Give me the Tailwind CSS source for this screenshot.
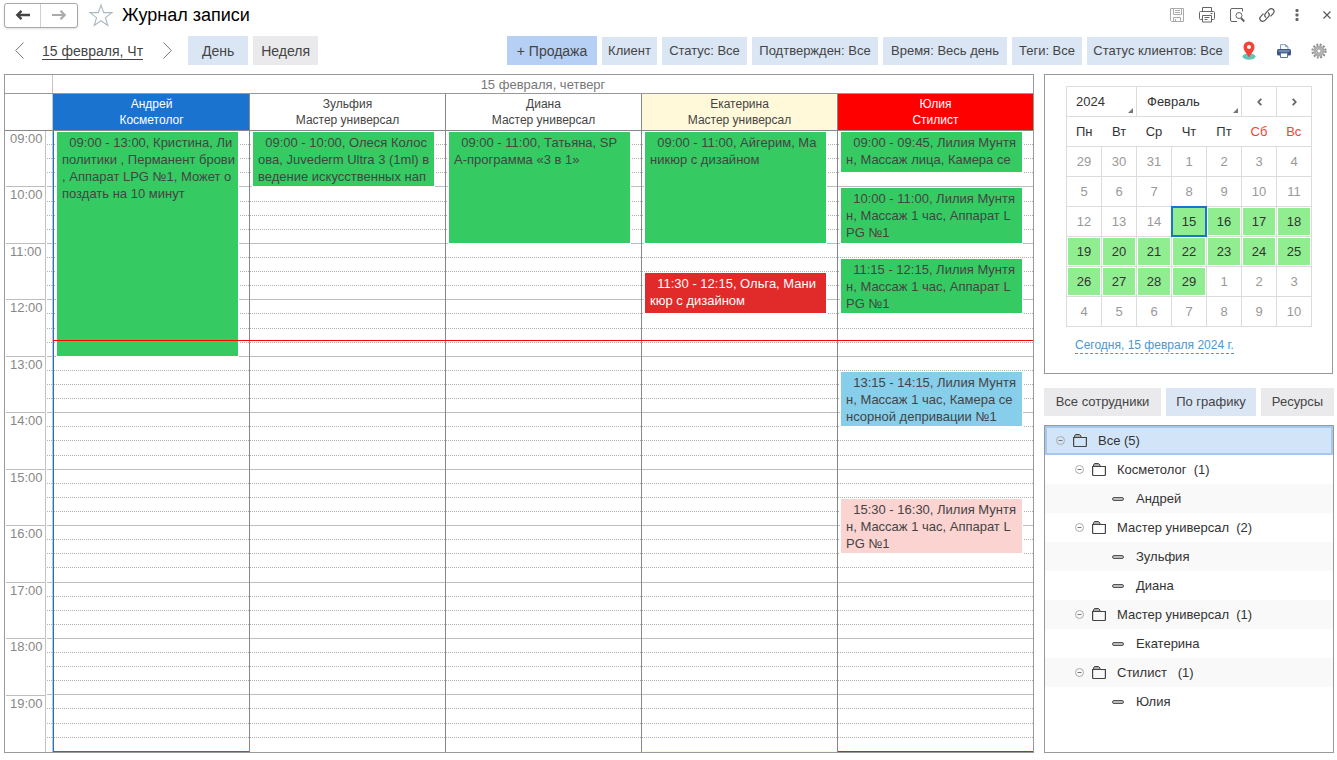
<!DOCTYPE html>
<html lang="ru">
<head>
<meta charset="utf-8">
<title>Журнал записи</title>
<script src="https://cdn.jsdelivr.net/npm/@tailwindcss/browser@4"></script>
</head>
<body class="flex min-h-screen flex-col bg-white pr-[3px] pb-[7px] pl-1 font-['Liberation_Sans',Arial,sans-serif] text-[13px] leading-4 text-[#444]">

<header class="flex h-[30px] items-center">
  <div class="flex h-[25px] overflow-hidden rounded-[3px] border border-[#a8a8a8] bg-white shadow-sm">
    <button type="button" aria-label="Назад" class="flex w-9 items-center justify-center border-r border-[#d0d0d0]">
      <svg width="16" height="12" viewBox="0 0 16 12" fill="none" stroke="#444" stroke-width="2.4"><path d="M15 6H3M6.500 1.800L2.300 6l4.200 4.200"/></svg>
    </button>
    <button type="button" aria-label="Вперед" class="flex w-9 items-center justify-center">
      <svg width="16" height="12" viewBox="0 0 16 12" fill="none" stroke="#aaa" stroke-width="2.200"><path d="M1 6H13M9.500 1.800L13.700 6l-4.200 4.200"/></svg>
    </button>
  </div>
  <button type="button" aria-label="В избранное" class="ml-2.5">
    <svg width="26" height="24" viewBox="0 0 26 24" fill="none" stroke="#a9b8c0" stroke-width="1.100"><path d="M13 2l2.700 7.600h8.300l-6.600 5 2.400 7.900-6.800-4.800-6.800 4.800 2.400-7.900-6.600-5h8.300z"/></svg>
  </button>
  <h1 class="ml-2 text-lg leading-6 text-black">Журнал записи</h1>
  <div class="ml-auto flex items-center">
    <button type="button" aria-label="Сохранить" class="flex w-[30px] justify-center">
      <svg width="16" height="16" viewBox="0 0 16 16" fill="none" stroke="#aaa"><path d="M1.500 1.500h13v13h-12l-1-1zM4.500 1.500v6h8v-6M6 3.500h5M6 5.500h5M4.500 14.500v-4h7v4M6.500 12v2"/></svg>
    </button>
    <button type="button" aria-label="Печать" class="flex w-[30px] justify-center">
      <svg width="18" height="16" viewBox="0 0 18 16" fill="none" stroke="#666"><path d="M4.500 4.500v-4h9v4M4.500 12.500H2.500a1 1 0 0 1-1-1v-6a1 1 0 0 1 1-1h13a1 1 0 0 1 1 1v6a1 1 0 0 1-1 1H13.500M4.500 8.500h9v6.500h-9zM6.500 10.500h5M6.500 12.500h3M12.500 6.500h2"/></svg>
    </button>
    <button type="button" aria-label="Просмотр" class="flex w-[30px] justify-center">
      <svg width="16" height="16" viewBox="0 0 16 16" fill="none" stroke="#666"><path d="M8 14.500H3a1.500 1.500 0 0 1-1.500-1.500V3A1.500 1.500 0 0 1 3 1.500h10.500v3"/><circle cx="10" cy="8.500" r="3"/><path stroke-width="2" d="M12 11l3.300 3.500"/></svg>
    </button>
    <button type="button" aria-label="Ссылка" class="flex w-[30px] justify-center">
      <svg width="18" height="16" viewBox="0 0 18 16" fill="none" stroke="#555" stroke-width="1.200"><path d="M8 10.500C6.300 9 6.500 7.500 7.500 6.300L11 2.700c1.300-1.300 3.200-1.300 4.300-.2s1.100 2.900-.2 4.200L12.500 9.300"/><path d="M10 5.500c1.700 1.500 1.500 3 .5 4.200L7 13.300c-1.300 1.300-3.200 1.300-4.300.2s-1.100-2.900.2-4.200L5.500 6.700"/></svg>
    </button>
    <button type="button" aria-label="Ещё" class="mr-2 flex w-[30px] justify-center">
      <svg width="4" height="12" viewBox="0 0 4 12" fill="#666"><rect x=".5" width="3" height="3" rx=".8"/><rect x=".5" y="4.500" width="3" height="3" rx=".8"/><rect x=".5" y="9" width="3" height="3" rx=".8"/></svg>
    </button>
    <button type="button" aria-label="Закрыть" class="flex w-3.5 justify-center">
      <svg width="8" height="8" viewBox="0 0 8 8" stroke="#555" stroke-width="1.100"><path d="M.5.500l7 7M7.500.500l-7 7"/></svg>
    </button>
  </div>
</header>

<nav class="mt-[6px] flex h-[29px] items-center">
  <button type="button" aria-label="Предыдущий день" class="ml-[11px]">
    <svg width="9" height="17" viewBox="0 0 9 17" fill="none" stroke="#777"><path d="M8.500.500L.700 8.500l7.800 8"/></svg>
  </button>
  <a href="#" class="ml-[18px] border-b border-[#444] pt-px text-sm leading-4">15 февраля, Чт</a>
  <button type="button" aria-label="Следующий день" class="ml-5">
    <svg width="9" height="17" viewBox="0 0 9 17" fill="none" stroke="#777"><path d="M.500.500l7.800 8-7.800 8"/></svg>
  </button>
  <button type="button" class="ml-4 h-[29px] w-[60px] bg-[#dae6f4] text-sm">День</button>
  <button type="button" class="ml-[5px] h-[29px] w-[65px] bg-[#eaeaec] text-sm">Неделя</button>
  <div class="ml-auto flex items-end gap-[5px]">
    <button type="button" class="h-[29px] w-[90px] bg-[#b5cff5] text-sm">+ Продажа</button>
    <button type="button" class="h-7 w-[55px] bg-[#dae6f4]">Клиент</button>
    <button type="button" class="h-7 w-[85px] bg-[#dae6f4]">Статус: Все</button>
    <button type="button" class="h-7 w-[126px] bg-[#dae6f4]">Подтвержден: Все</button>
    <button type="button" class="h-7 w-[124px] bg-[#dae6f4]">Время: Весь день</button>
    <button type="button" class="h-7 w-[70px] bg-[#dae6f4]">Теги: Все</button>
    <button type="button" class="h-7 w-[142px] bg-[#dae6f4]">Статус клиентов: Все</button>
  </div>
  <button type="button" aria-label="На карте" class="ml-3">
    <svg width="16" height="20" viewBox="0 0 16 20"><ellipse cx="8" cy="15.500" rx="6.500" ry="3.200" fill="#63c6ba"/><path d="M8 16.500C5.500 12 2.500 9.500 2.500 6a5.500 5.500 0 0 1 11 0C13.500 9.500 10.500 12 8 16.500z" fill="#f44336"/><circle cx="8" cy="6" r="2" fill="#fff"/></svg>
  </button>
  <button type="button" aria-label="Печать журнала" class="ml-5">
    <svg width="14" height="14" viewBox="0 0 14 14"><path d="M3.500 6V.700h5l2.500 2V6" fill="#fff" stroke="#7f9bbd"/><path d="M8.500.700v2h2.500" fill="none" stroke="#7f9bbd"/><rect y="5" width="14" height="6.500" rx="1.500" fill="#3b5688"/><path d="M1.500 7h11" stroke="#a9bbd6"/><path d="M3.500 9h7v4.500h-7z" fill="#fff" stroke="#5675a0"/></svg>
  </button>
  <button type="button" aria-label="Настройки" class="mr-[7px] ml-5">
    <svg width="16" height="16" viewBox="0 0 16 16" fill="none"><circle cx="8" cy="8" r="6.500" stroke="#8f8f8f" stroke-width="2.200" stroke-dasharray="1.900 1.503"/><circle cx="8" cy="8" r="4.200" stroke="#acacac" stroke-width="2.800"/><circle cx="8" cy="8" r="2.200" fill="#fff" stroke="#808080"/></svg>
  </button>
</nav>

<main class="mt-[9px] flex flex-1 gap-2.5">
  <section class="flex min-w-0 flex-1 flex-col border border-[#999]" aria-label="Расписание">
    <div class="flex h-[19px] border-b border-[#999] text-[#777]">
      <div class="w-12 border-r border-[#c4c4c4]"></div>
      <div class="flex-1 text-center leading-[19px]">15 февраля, четверг</div>
    </div>
    <div class="flex h-[37px] border-b border-[#888]">
      <div class="w-12 border-r border-[#c4c4c4]"></div>
      <div id="heads" class="flex flex-1 text-center text-xs leading-4"></div>
    </div>
    <div class="flex flex-1">
      <div id="hours" class="flex w-10 flex-col pl-px text-[#888]"></div>
      <div class="flex w-2 flex-col border-x border-[#c4c4c4] pl-px" data-slots></div>
      <div id="columns" class="relative flex flex-1"></div>
    </div>
  </section>

  <aside class="flex w-[290px] flex-none flex-col">
    <section class="mr-px h-[300px] border border-[#999] px-[21px] pt-[11px]" aria-label="Календарь">
      <div class="flex h-[31px] w-[246px] border border-[#dcdcdc] text-[#333]">
        <label class="relative w-[70px] border-r border-[#dcdcdc]">
          <select aria-label="Год" class="h-full w-full appearance-none pl-[9px] outline-none"><option>2024</option></select>
          <svg class="absolute right-[3px] bottom-[3px]" width="5" height="5"><path d="M5 0v5H0z" fill="#777"/></svg>
        </label>
        <label class="relative w-[105px] border-r border-[#dcdcdc]">
          <select aria-label="Месяц" class="h-full w-full appearance-none pl-2.5 outline-none"><option>Февраль</option></select>
          <svg class="absolute right-[3px] bottom-[3px]" width="5" height="5"><path d="M5 0v5H0z" fill="#777"/></svg>
        </label>
        <button type="button" aria-label="Предыдущий месяц" class="flex w-[35px] items-center justify-center border-r border-[#dcdcdc]"><svg width="5" height="8" viewBox="0 0 5 8" fill="none" stroke="#666" stroke-width="1.800"><path d="M4.300.800L1.300 4l3 3.200"/></svg></button>
        <button type="button" aria-label="Следующий месяц" class="flex flex-1 items-center justify-center"><svg width="5" height="8" viewBox="0 0 5 8" fill="none" stroke="#666" stroke-width="1.800"><path d="M.700.800l3 3.200-3 3.200"/></svg></button>
      </div>
      <table class="-mt-px w-[246px] table-fixed border-collapse text-center">
        <thead><tr id="weekdays" class="h-[30px] border border-[#dcdcdc] text-[#333]"></tr></thead>
        <tbody id="days"></tbody>
      </table>
      <a href="#" class="mt-2.5 ml-[9px] inline-block border-b border-dashed border-[#4a98d3] text-xs leading-4 text-[#4a98d3]">Сегодня, 15 февраля 2024 г.</a>
    </section>
    <div class="mt-[14px] flex gap-[5px]">
      <button type="button" class="h-7 w-[117px] bg-[#eaeaec]">Все сотрудники</button>
      <button type="button" class="h-7 w-[90px] bg-[#dae6f4]">По графику</button>
      <button type="button" class="h-7 flex-1 bg-[#eaeaec]">Ресурсы</button>
    </div>
    <ul id="tree" class="mt-[9px] flex-1 border border-[#999] text-[#333]" role="tree"></ul>
  </aside>
</main>

<script>
const START = 9, HOURS = 11;
const pct = h => (h / HOURS * 100) + '%';
const time = t => { const [h, m] = t.split(':').map(Number); return h + m / 60 - START; };
const GREEN = 'bg-[#36cb62]';

const staff = [
  { name: 'Андрей', role: 'Косметолог', head: 'bg-[#1a73cf] text-white border-[#1a73cf]', col: 'border-l-[#1a73cf]', end: 'border-[#1a73cf]', events: [
    ['09:00', '13:00', 'Кристина, Ли\nполитики , Перманент брови\n, Аппарат LPG №1, Может о\nпоздать на 10 минут', GREEN] ] },
  { name: 'Зульфия', role: 'Мастер универсал', head: 'border-[#888]', col: 'border-l-[#888]', end: 'border-white', events: [
    ['09:00', '10:00', 'Олеся Колос\nова, Juvederm Ultra 3 (1ml) в\nведение искусственных нап', GREEN] ] },
  { name: 'Диана', role: 'Мастер универсал', head: 'border-[#888]', col: 'border-l-[#888]', end: 'border-white', events: [
    ['09:00', '11:00', 'Татьяна, SP\nА-программа «3 в 1»', GREEN] ] },
  { name: 'Екатерина', role: 'Мастер универсал', head: 'bg-[#fff8d9] border-[#888]', col: 'border-l-[#888]', end: 'border-[#fff8d9]', events: [
    ['09:00', '11:00', 'Айгерим, Ма\nникюр с дизайном', GREEN],
    ['11:30', '12:15', 'Ольга, Мани\nкюр с дизайном', 'bg-[#e12a2a] text-white'] ] },
  { name: 'Юлия', role: 'Стилист', head: 'bg-[#ff0000] text-white border-[#888]', col: 'border-l-[#888]', end: 'border-[#e01818]', events: [
    ['09:00', '09:45', 'Лилия Мунтя\nн, Массаж лица, Камера се', GREEN],
    ['10:00', '11:00', 'Лилия Мунтя\nн, Массаж 1 час, Аппарат L\nPG №1', GREEN],
    ['11:15', '12:15', 'Лилия Мунтя\nн, Массаж 1 час, Аппарат L\nPG №1', GREEN],
    ['13:15', '14:15', 'Лилия Мунтя\nн, Массаж 1 час, Камера се\nнсорной депривации №1', 'bg-[#87ceeb]'],
    ['15:30', '16:30', 'Лилия Мунтя\nн, Массаж 1 час, Аппарат L\nPG №1', 'bg-[#fbd3d1]'] ] },
];

const slots = end => Array.from({ length: HOURS * 4 }, (_, i) =>
  `<div class="min-h-3.5 flex-1 border-b ${i === HOURS * 4 - 1 ? end : i % 4 === 3 ? 'border-[#bdbdbd]' : 'border-dotted border-[#b0b0b0]'}"></div>`).join('');

document.getElementById('heads').innerHTML = staff.map(s =>
  `<div class="flex-1 border-l pt-[2px] ${s.head}">${s.name}<br>${s.role}</div>`).join('');
document.getElementById('hours').innerHTML = Array.from({ length: HOURS }, (_, i) =>
  `<div class="min-h-14 flex-1 border-b pl-1 ${i < HOURS - 1 ? 'border-[#bdbdbd]' : 'border-white'}">${String(START + i).padStart(2, '0')}:00</div>`).join('');
document.querySelector('[data-slots]').innerHTML = slots('border-white');
document.getElementById('columns').innerHTML = staff.map(s =>
  `<div class="relative flex flex-1 flex-col border-l ${s.col}">${slots(s.end)}` +
  s.events.map(([a, b, text, color]) =>
    `<div class="absolute right-2.5 left-[2px] border border-white" style="top:${pct(time(a))};height:${pct(time(b) - time(a))}"><div class="h-full overflow-hidden whitespace-pre pt-[2px] pl-[5px] leading-[17px] ${color}">  ${a} - ${b}, ${text}</div></div>`).join('') +
  `</div>`).join('') +
  `<div class="absolute inset-x-0 h-px bg-[#ff0000]" style="top:${pct(time('12:42'))}"></div>`;

document.getElementById('weekdays').innerHTML = ['Пн', 'Вт', 'Ср', 'Чт', 'Пт', 'Сб', 'Вс'].map((d, i) =>
  `<th scope="col" class="font-normal ${i > 4 ? 'text-[#f44336]' : ''}">${d}</th>`).join('');
let rows = '';
for (let w = 0; w < 6; w++) {
  rows += '<tr class="h-[30px]">';
  for (let d = 0; d < 7; d++) {
    const n = w * 7 + d - 2, feb = n >= 1 && n <= 29;
    const label = n < 1 ? n + 31 : n > 29 ? n - 29 : n;
    const tone = n === 15 ? 'bg-[#90ee90] text-[#333] outline-2 -outline-offset-1 outline-[#1a73cf]'
      : feb && n > 15 ? 'bg-[#90ee90] text-[#333] border border-white' : 'text-[#999]';
    rows += `<td class="border border-[#dcdcdc] p-0"><button type="button" class="block h-[29px] w-full ${tone}">${label}</button></td>`;
  }
  rows += '</tr>';
}
document.getElementById('days').innerHTML = rows;

const minus = '<svg width="9" height="9" viewBox="0 0 9 9" fill="none" stroke="#aaa"><circle cx="4.500" cy="4.500" r="4"/><path d="M2.500 4.500h4" stroke="#777"/></svg>';
const folder = '<svg width="14" height="13" viewBox="0 0 14 13" fill="none" stroke="#444"><path d="M1.500 3.500V2l1-1.500h4l1.500 1.500v1.500" fill="#aaa"/><path stroke-width="1.200" d="M.600 3.500h12.800v8a1 1 0 0 1-1 1H1.600a1 1 0 0 1-1-1z"/></svg>';
const dash = '<svg width="12" height="4" viewBox="0 0 12 4"><rect x=".5" y=".5" width="11" height="3" rx="1.500" fill="#bbb" stroke="#555"/></svg>';
const tree = [[0, 'Все (5)'], [1, 'Косметолог  (1)'], [2, 'Андрей'], [1, 'Мастер универсал  (2)'], [2, 'Зульфия'], [2, 'Диана'],
  [1, 'Мастер универсал  (1)'], [2, 'Екатерина'], [1, 'Стилист   (1)'], [2, 'Юлия']];
const pad = ['pl-[9px] border-2 border-[#a3c8f2] bg-[#d2e4f8]', 'pl-[30px]', 'pl-[67px]'];
document.getElementById('tree').innerHTML = tree.map(([lvl, text], i) =>
  `<li role="treeitem" class="flex h-[29px] items-center whitespace-pre ${pad[lvl]} ${i && i % 2 === 0 ? 'bg-[#f9f9f9]' : ''}">` +
  (lvl === 2 ? `${dash}<span class="ml-3">${text}</span>` : `<button type="button" aria-label="Свернуть" class="mr-2">${minus}</button>${folder}<span class="ml-[11px]">${text}</span>`) +
  `</li>`).join('');
</script>
</body>
</html>
